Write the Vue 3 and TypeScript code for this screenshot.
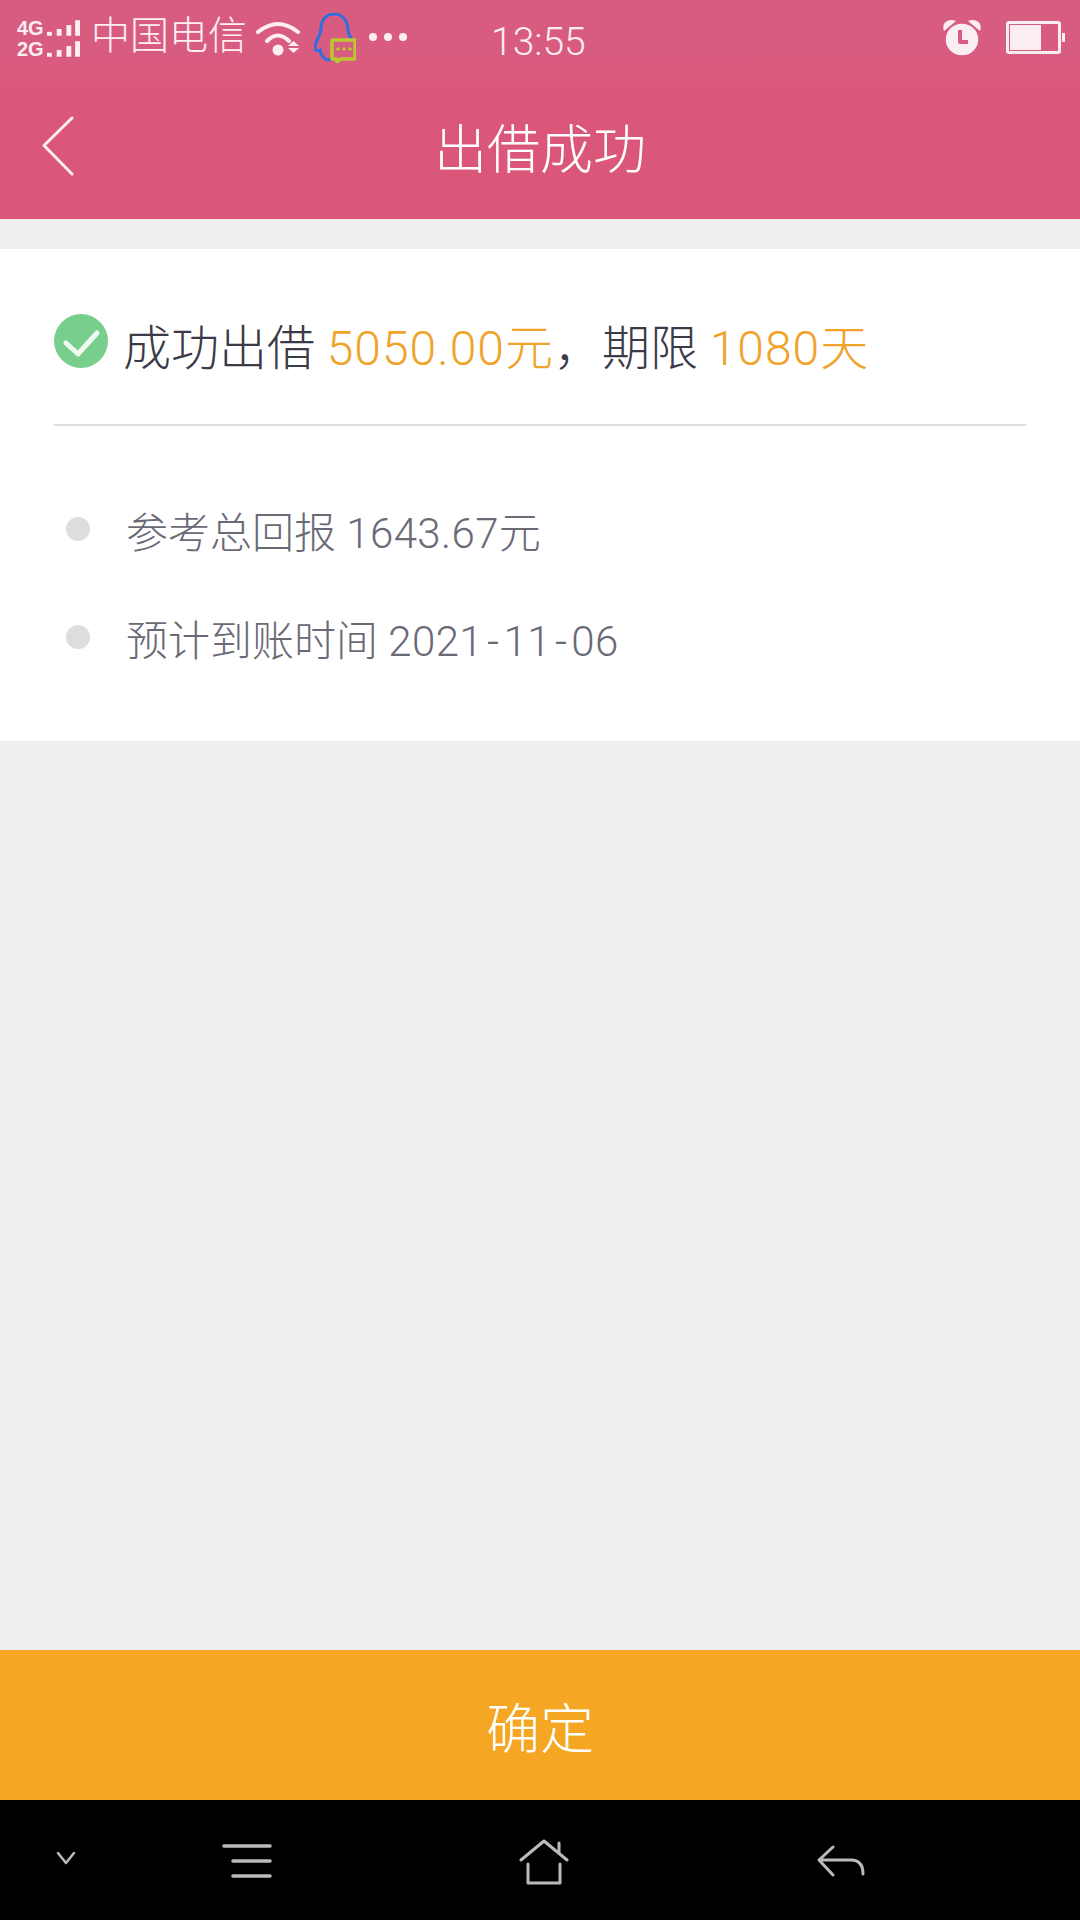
<script setup lang="ts">
const details = [
  { label: "参考总回报", parts: ["1643.67元"] },
  { label: "预计到账时间", parts: ["2021", "11", "06"] },
];
</script>

<template>
  <main class="page">
    <div class="top">
      <div class="status">
        <div class="signal">
          <div v-for="net in ['4G', '2G']" :key="net" class="signal-row">
            <span class="net">{{ net }}</span>
            <svg width="36" height="16" viewBox="0 0 36 16">
              <rect x="0" y="12" width="5" height="4" />
              <rect x="10" y="9" width="5" height="7" />
              <rect x="20" y="5" width="5" height="11" />
              <rect x="29" y="0" width="5" height="16" />
            </svg>
          </div>
        </div>
        <span class="carrier">中国电信</span>
        <svg class="wifi" width="44" height="36" viewBox="0 0 44 36">
          <path d="M2 11 Q22 -5 42 11" fill="none" stroke="#fdeef2" stroke-width="4" stroke-linecap="round" />
          <path d="M11 20 Q22 9 33 20" fill="none" stroke="#fdeef2" stroke-width="4" stroke-linecap="round" />
          <circle cx="22" cy="29" r="5.500" fill="#fdeef2" />
          <path d="M32 25h11l-5.500-5zM32 27h11l-5.500 5z" fill="#fdeef2" />
        </svg>
        <svg class="qq" width="42" height="50" viewBox="0 0 42 50">
          <path d="M7 16 C7 6 13 1 20 1 C28 1 33 7 34 16 C34 20 36 23 37 26" fill="none" stroke="#2b6fe0" stroke-width="3" stroke-linecap="round" />
          <path d="M7 16 C7 22 1 28 1 35 C1 38 4 38 6 37 C6 41 9 44 11 46 C13 47 16 47 19 46" fill="none" stroke="#2b6fe0" stroke-width="3" stroke-linecap="round" />
          <path d="M18 27 h23 v19 h-14 l-4 3 v-3 h-5z" fill="#d85c80" stroke="#bcc62e" stroke-width="3.500" stroke-linejoin="round" />
          <circle cx="24" cy="36" r="1.800" fill="#bcc62e" />
          <circle cx="30" cy="36" r="1.800" fill="#bcc62e" />
          <circle cx="36" cy="36" r="1.800" fill="#bcc62e" />
        </svg>
        <div class="more"><i></i><i></i><i></i></div>
        <span class="clock">13:55</span>
        <svg class="alarm" width="40" height="38" viewBox="0 0 40 38">
          <path d="M2 13 C-1 5 6 0 14 3 Z M38 13 C41 5 34 0 26 3 Z" fill="#fbeef2" />
          <ellipse cx="20" cy="21.500" rx="17" ry="16.500" fill="#fbeef2" stroke="#d85c80" stroke-width="1.500" />
          <path d="M18 12 v12 h8" fill="none" stroke="#d85c80" stroke-width="4" stroke-linejoin="round" />
        </svg>
        <div class="battery">
          <div class="battery-body"><div class="battery-level" style="width: 65%"></div></div>
          <div class="battery-tip"></div>
        </div>
      </div>
      <header class="nav">
        <svg class="back" width="32" height="60" viewBox="0 0 32 60">
          <path d="M30 2 L2 29.500 L30 58" fill="none" stroke="#fdeef2" stroke-width="3" stroke-linecap="round" stroke-linejoin="round" />
        </svg>
        <h1 class="title">出借成功</h1>
      </header>
    </div>

    <section class="card">
      <div class="headline">
        <svg class="check" width="54" height="54" viewBox="0 0 54 54">
          <circle cx="27" cy="27" r="27" fill="#78cf8d" />
          <path d="M12 29 L24 40 L43 19" fill="none" stroke="#eefaf0" stroke-width="5" stroke-linecap="round" stroke-linejoin="round" />
        </svg>
        <p class="headline-text">成功出借 <em>5050.00元</em>，期限 <em>1080天</em></p>
      </div>
      <ul class="details">
        <li v-for="item in details" :key="item.label">
          <span class="dot"></span>
          <span class="detail-text">
            {{ item.label }}
            <span class="value"><template v-for="(part, i) in item.parts" :key="i"><span v-if="i > 0" class="dash">-</span>{{ part }}</template></span>
          </span>
        </li>
      </ul>
    </section>

    <div class="spacer"></div>

    <button class="confirm" type="button">确定</button>

    <nav class="sysbar">
      <svg width="24" height="16" viewBox="0 0 24 16" class="sys-down">
        <path d="M3 3 L11 13 L19 3" fill="none" stroke="#bbb" stroke-width="2.500" stroke-linecap="round" stroke-linejoin="round" />
      </svg>
      <svg width="50" height="34" viewBox="0 0 50 34" class="sys-menu">
        <path d="M2 2 H48 M11 17 H48 M11 32 H48" fill="none" stroke="#bbb" stroke-width="3.500" stroke-linecap="round" />
      </svg>
      <svg width="50" height="46" viewBox="0 0 50 46" class="sys-home">
        <path d="M2 21 L25 2 L48 21 M40 4 V14 M9 25 V44 H41 V25" fill="none" stroke="#bbb" stroke-width="3" stroke-linecap="round" stroke-linejoin="round" />
      </svg>
      <svg width="48" height="32" viewBox="0 0 48 32" class="sys-back">
        <path d="M16 2 L2 15 L16 30 M2 15 H34 C42 15 46 20 46 29" fill="none" stroke="#bbb" stroke-width="3" stroke-linecap="round" stroke-linejoin="round" />
      </svg>
    </nav>
  </main>
</template>

<style>
body {
  background: #eeeeee;
}
</style>

<style scoped>
.page {
  width: 1080px;
  height: 1920px;
  display: flex;
  flex-direction: column;
  background: #eeeeee;
  font-family: Roboto, "Noto Sans CJK SC", sans-serif;
  font-weight: 300;
  overflow: hidden;
}

.top {
  height: 219px;
  background: linear-gradient(#d85c80 0, #d85c80 50px, #db5779 100px);
  flex-shrink: 0;
}

.status {
  height: 72px;
  display: flex;
  align-items: center;
  padding-left: 17px;
  color: #fdeef2;
}

.signal {
  display: flex;
  flex-direction: column;
  gap: 5px;
  width: 65px;
  margin-top: 4px;
}

.signal-row {
  display: flex;
  align-items: flex-end;
  height: 16px;
}

.signal-row svg {
  fill: #fdeef2;
}

.net {
  font-family: "Liberation Sans", sans-serif;
  font-size: 20px;
  font-weight: 700;
  line-height: 16px;
  width: 31px;
}

.carrier {
  font-size: 39px;
  margin-left: 9px;
  line-height: 44px;
}

.wifi {
  margin-left: 9px;
  margin-top: 5px;
}

.qq {
  margin-left: 14px;
  margin-top: 4px;
}

.more {
  display: flex;
  gap: 7px;
  margin-left: 13px;
  margin-top: 2px;
}

.more i {
  width: 8px;
  height: 8px;
  border-radius: 50%;
  background: #fdeef2;
}

.clock {
  font-size: 39px;
  margin-left: 84px;
  margin-top: 12px;
}

.alarm {
  margin-left: auto;
  margin-top: 1px;
}

.battery {
  display: flex;
  align-items: center;
  gap: 1px;
  margin-left: 24px;
  margin-right: 15px;
  margin-top: 3px;
}

.battery-body {
  width: 47px;
  height: 25px;
  border: 3px solid #fbeef2;
  border-radius: 3px;
  padding: 1px;
}

.battery-level {
  height: 100%;
  background: #fbeef2;
}

.battery-tip {
  width: 3px;
  height: 9px;
  background: #fbeef2;
}

.nav {
  height: 147px;
  position: relative;
  display: flex;
  align-items: center;
  justify-content: center;
}

.back {
  position: absolute;
  left: 42px;
  top: 44px;
}

.title {
  margin: 0;
  font-size: 53px;
  font-weight: 300;
  color: #fff;
}

.card {
  margin-top: 30px;
  height: 492px;
  background: #fff;
  padding: 0 54px;
  flex-shrink: 0;
  box-sizing: border-box;
}

.headline {
  height: 177px;
  display: flex;
  align-items: center;
  gap: 15px;
  border-bottom: 2px solid #dddddd;
  padding-top: 14px;
  box-sizing: border-box;
}

.check {
  flex-shrink: 0;
  margin-top: -6px;
}

.headline-text {
  margin: 0;
  font-size: 48px;
  color: #3a3a48;
  white-space: pre;
}

.headline-text em {
  font-style: normal;
  color: #f0a32a;
  letter-spacing: 1px;
}

.details {
  list-style: none;
  margin: 0;
  padding: 80px 0 0 12px;
  display: flex;
  flex-direction: column;
  gap: 58px;
  font-size: 42px;
  color: #6a6a77;
}

.details li {
  display: flex;
  align-items: center;
  gap: 36px;
  height: 50px;
}

.detail-text {
  margin-top: -3px;
}

.value {
  letter-spacing: 0.4px;
}

.dash {
  margin: 0 4px;
}

.dot {
  width: 24px;
  height: 24px;
  border-radius: 50%;
  background: #dddddd;
  margin-top: -4px;
}

.spacer {
  flex: 1;
}

.confirm {
  height: 150px;
  border: 0;
  background: #f5a623;
  color: #fff;
  font-family: inherit;
  font-weight: 300;
  font-size: 54px;
  flex-shrink: 0;
}

.sysbar {
  height: 120px;
  background: #000;
  position: relative;
  flex-shrink: 0;
}

.sysbar svg {
  position: absolute;
}

.sys-down { left: 55px; top: 50px; }
.sys-menu { left: 222px; top: 44px; }
.sys-home { left: 519px; top: 39px; }
.sys-back { left: 817px; top: 45px; }
</style>
